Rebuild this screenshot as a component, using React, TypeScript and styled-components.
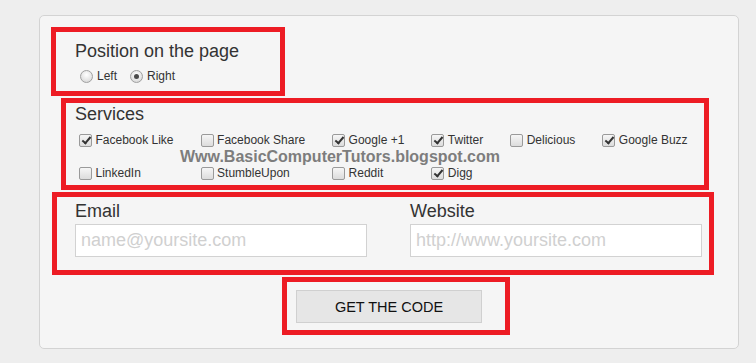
import React from "react";
import styled, { createGlobalStyle } from "styled-components";

const GlobalStyle = createGlobalStyle`
  body {
    margin: 0;
    background: #eeeeee;
    font-family: "Liberation Sans", Arial, sans-serif;
    color: #333;
  }
`;

const services = [
  { name: "Facebook Like", checked: true },
  { name: "Facebook Share", checked: false },
  { name: "Google +1", checked: true },
  { name: "Twitter", checked: true },
  { name: "Delicious", checked: false },
  { name: "Google Buzz", checked: true },
  { name: "LinkedIn", checked: false },
  { name: "StumbleUpon", checked: false },
  { name: "Reddit", checked: false },
  { name: "Digg", checked: true },
];

export default function App() {
  return (
    <>
      <GlobalStyle />
      <Page>
        <Panel>
          <Marked $left={11} $width={234} $height={69} $top={0}>
            <PositionBody>
              <Heading>Position on the page</Heading>
              <RadioRow>
                <Option>
                  <Radio type="radio" name="pos" value="left" />
                  Left
                </Option>
                <Option>
                  <Radio type="radio" name="pos" value="right" defaultChecked />
                  Right
                </Option>
              </RadioRow>
            </PositionBody>
          </Marked>

          <Marked $left={21} $width={648} $height={92} $top={2}>
            <ServicesBody>
              <Heading>Services</Heading>
              <ServiceGrid>
                {services.map((s) => (
                  <Option key={s.name}>
                    <Check type="checkbox" defaultChecked={s.checked} />
                    {s.name}
                  </Option>
                ))}
              </ServiceGrid>
              <Watermark>Www.BasicComputerTutors.blogspot.com</Watermark>
            </ServicesBody>
          </Marked>

          <Marked $left={12} $width={662} $height={83} $top={2}>
            <ContactBody>
              <Field>
                <Heading>Email</Heading>
                <TextInput placeholder="name@yoursite.com" />
              </Field>
              <Field>
                <Heading>Website</Heading>
                <TextInput placeholder="http://www.yoursite.com" />
              </Field>
            </ContactBody>
          </Marked>

          <Marked $left={242} $width={228} $height={58} $top={2}>
            <ButtonBody>
              <CodeButton>GET THE CODE</CodeButton>
            </ButtonBody>
          </Marked>
        </Panel>
      </Page>
    </>
  );
}

const Page = styled.div`
  padding: 15px 0 0 39px;
`;

const Panel = styled.div`
  box-sizing: border-box;
  width: 700px;
  height: 334px;
  padding-top: 11px;
  display: flex;
  flex-direction: column;
  background: #f5f5f5;
  border: 1px solid #d3d3d3;
  border-radius: 5px;
`;

const Marked = styled.div<{ $left: number; $width: number; $height: number; $top: number }>`
  box-sizing: border-box;
  position: relative;
  margin-left: ${(p) => p.$left}px;
  margin-top: ${(p) => p.$top}px;
  width: ${(p) => p.$width}px;
  height: ${(p) => p.$height}px;
  border: 5px solid #ed1c24;
`;

const Heading = styled.div`
  font-size: 18px;
  line-height: 21px;
  color: #333;
`;

const PositionBody = styled.div`
  padding: 9px 0 0 19px;
`;

const RadioRow = styled.div`
  display: flex;
  gap: 8px;
  margin-top: 6px;
  height: 16px;
`;

const Option = styled.label`
  display: flex;
  align-items: center;
  font-size: 12px;
  line-height: 16px;
  color: #333;
  white-space: nowrap;
`;

const Radio = styled.input`
  appearance: none;
  box-sizing: border-box;
  width: 13px;
  height: 13px;
  margin: 0 4px 0 5px;
  border-radius: 50%;
  border: 1px solid #a0a0a0;
  background: radial-gradient(circle at 50% 35%, #ffffff 0%, #e4e4e4 60%, #d0d0d0 100%);
  display: grid;
  place-items: center;
  &:checked::after {
    content: "";
    width: 5px;
    height: 5px;
    border-radius: 50%;
    background: #4a4a4a;
  }
`;

const ServicesBody = styled.div`
  padding: 1px 0 0 9px;
`;

const ServiceGrid = styled.div`
  display: grid;
  grid-template-columns: repeat(6, auto);
  grid-auto-rows: 16px;
  justify-content: start;
  column-gap: 23px;
  row-gap: 17px;
  margin-top: 7px;
`;

const Check = styled.input`
  appearance: none;
  box-sizing: border-box;
  position: relative;
  width: 13px;
  height: 13px;
  margin: 0 3.5px 0 4px;
  border-radius: 2px;
  border: 1px solid #9a9a9a;
  background: linear-gradient(#f6f6f6, #dcdcdc);
  &:checked::after {
    content: "";
    position: absolute;
    left: 3.5px;
    top: 0.5px;
    width: 3px;
    height: 7px;
    border: solid #333;
    border-width: 0 2px 2px 0;
    transform: rotate(40deg);
  }
`;

const Watermark = styled.div`
  position: absolute;
  left: 114px;
  top: 45px;
  font-size: 16px;
  line-height: 18px;
  font-weight: bold;
  color: #7d7d7d;
  white-space: nowrap;
  pointer-events: none;
`;

const ContactBody = styled.div`
  display: grid;
  grid-template-columns: 292px 292px;
  column-gap: 43px;
  padding: 4px 0 0 18px;
`;

const Field = styled.div`
  display: flex;
  flex-direction: column;
  gap: 2px;
`;

const TextInput = styled.input`
  box-sizing: border-box;
  width: 292px;
  height: 33px;
  padding: 0 5px;
  border: 1px solid #d2d2d2;
  background: #fff;
  font-family: "Liberation Sans", Arial, sans-serif;
  font-size: 18px;
  color: #333;
  outline: none;
  &::placeholder {
    color: #d0d0d0;
  }
`;

const ButtonBody = styled.div`
  padding: 8px 0 0 9px;
`;

const CodeButton = styled.button`
  box-sizing: border-box;
  width: 186px;
  height: 33px;
  background: #e6e6e6;
  border: 1px solid #d0d0d0;
  font-family: "Liberation Sans", Arial, sans-serif;
  font-size: 14.5px;
  color: #111;
  cursor: pointer;
`;
